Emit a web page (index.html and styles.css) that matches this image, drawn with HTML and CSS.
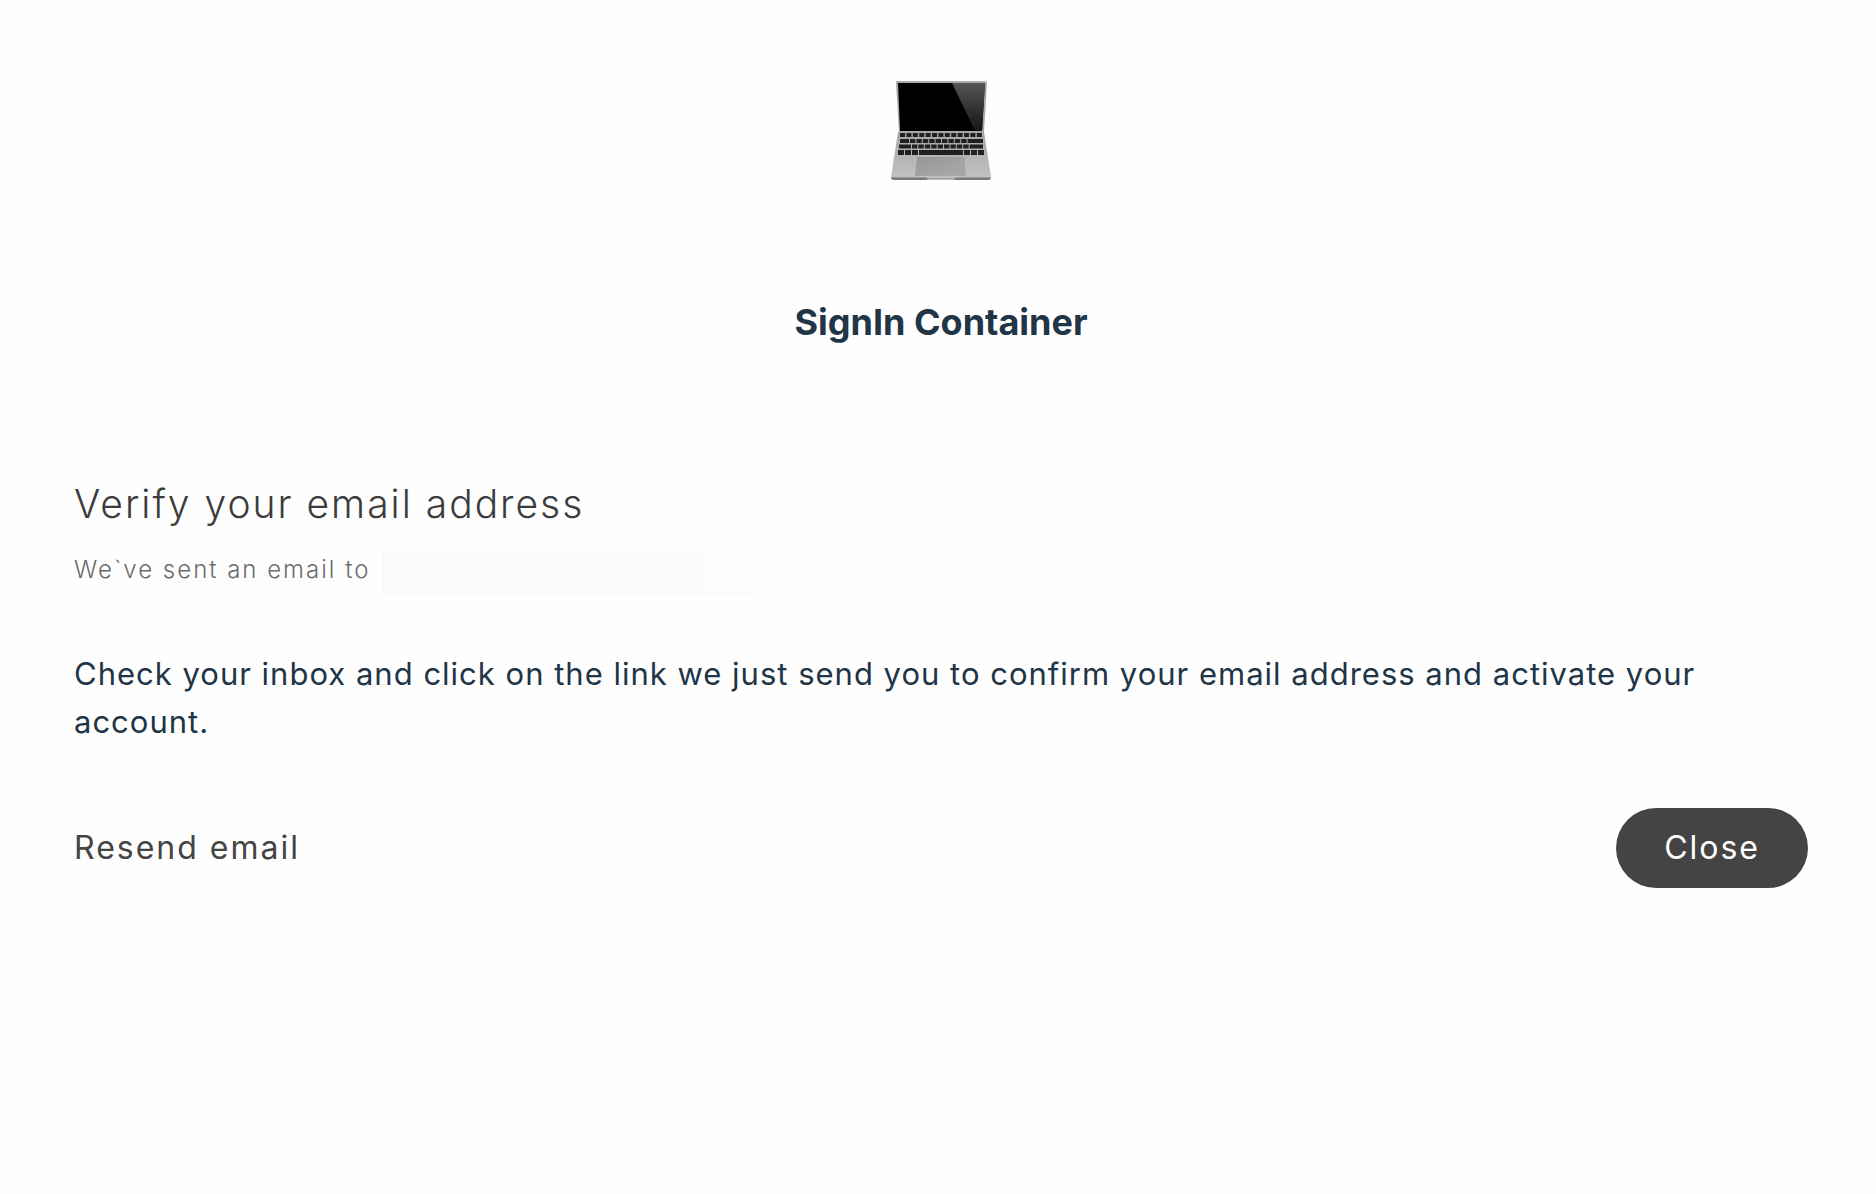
FILE: index.html
```html
<!DOCTYPE html>
<html lang="en">
<head>
<meta charset="utf-8">
<meta name="viewport" content="width=device-width, initial-scale=1">
<title>SignIn Container</title>
<link rel="stylesheet" href="styles.css">
</head>
<body>
<header class="brand">
  <svg class="laptop" viewBox="0 0 100 102" role="img" aria-label="Laptop">
    <defs>
      <linearGradient id="glare" x1="0" y1="0" x2="0" y2="1"><stop offset="0" stop-color="#555"/><stop offset="1" stop-color="#151515"/></linearGradient>
      <linearGradient id="base" x1="0" y1="0" x2="0" y2="1"><stop offset="0" stop-color="#a5a5a5"/><stop offset="1" stop-color="#c2c2c2"/></linearGradient>
      <linearGradient id="pad" x1="0" y1="0" x2="1" y2="1"><stop offset="0" stop-color="#979797"/><stop offset="1" stop-color="#aaa"/></linearGradient>
    </defs>
    <path d="M7 52H93L100 97Q100 99 97 99H3Q0 99 0 97Z" fill="url(#base)"/>
    <path d="M0 97.500H35L37 98.500H63L65 97.500H100Q100 100 97 100H65L63 99.500H37L35 100H3Q0 100 0 97.500Z" fill="#7a7a7a"/>
    <path d="M6 1H94Q96 1 96 3L93 52H8L5 3Q5 1 6 1Z" fill="#aaa"/>
    <path d="M7 3H94L91 51H9Z" fill="#000"/>
    <path d="M61 3H94L91 51H84Z" fill="url(#glare)"/>
    <g fill="none" stroke="#202020" stroke-width="4">
      <path d="M9 55H91" stroke-dasharray="5 1.4"/>
      <path d="M9 61H92" stroke-dasharray="9 1 5.400 1 5.400 1 5.400 1 5.400 1 5.400 1 5.400 1 5.400 1 5.400 1 5.400 1 16"/>
      <path d="M8 66.500H92" stroke-dasharray="12 1 5.400 1 5.400 1 5.400 1 5.400 1 5.400 1 5.400 1 5.400 1 5.400 1 5.400 1 16"/>
      <path d="M7 72.500H93" stroke-width="5" stroke-dasharray="6 1 6 1 6 1 44 1 6 1 6 1 6"/>
    </g>
    <path d="M26 77H73L75 96H24Z" fill="url(#pad)"/>
  </svg>
  <h1 class="brand-title">SignIn Container</h1>
</header>
<main class="verify">
  <h2 class="verify-title">Verify your email address</h2>
  <p class="verify-sent">We`ve sent an email to <span class="recipient"></span></p>
  <p class="verify-text">Check your inbox and click on the link we just send you to confirm your email address and activate your account.</p>
  <div class="actions">
    <button class="resend" type="button">Resend email</button>
    <button class="close" type="button">Close</button>
  </div>
</main>
</body>
</html>
```
FILE: styles.css
```css
* {
  box-sizing: border-box;
}

body {
  margin: 0;
  padding: 80px 68px 80px 74px;
  background: #fefefe;
  color: #213547;
  font-family: Inter, "Liberation Sans", sans-serif;
  font-size: 32px;
  line-height: 48px;
}

h1,
h2,
p {
  margin: 0;
}

.brand {
  display: flex;
  flex-direction: column;
  align-items: center;
  gap: 116px;
}

.laptop {
  width: 100px;
  height: 102px;
}

.brand-title {
  font-size: 36px;
  font-weight: 700;
}

.verify {
  margin-top: 128px;
}

.verify-title {
  color: #3c3c3c;
  font-size: 39px;
  font-weight: 300;
  line-height: 60px;
  letter-spacing: 2px;
}

.verify-sent {
  display: flex;
  gap: 12px;
  margin-top: 18px;
  color: #6b6b6b;
  font-size: 24px;
  font-weight: 300;
  line-height: 36px;
  letter-spacing: 2px;
}

.recipient {
  width: 378px;
  height: 44px;
  background: linear-gradient(90deg, #fafafa 60%, #fbfdfd);
}

.verify-text {
  margin-top: 54px;
  font-size: 31px;
  letter-spacing: 1px;
}

.actions {
  display: flex;
  align-items: center;
  justify-content: space-between;
  margin-top: 62px;
}

.resend,
.close {
  border: 0;
  font: inherit;
  letter-spacing: 2px;
  cursor: pointer;
}

.resend {
  padding: 0;
  background: none;
  color: #444;
}

.close {
  padding: 16px 48px;
  border-radius: 40px;
  background: #444;
  color: #fff;
}
```
